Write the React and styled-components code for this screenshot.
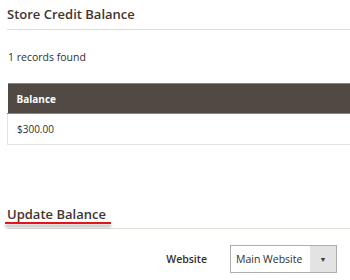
import React from "react"
import styled, { createGlobalStyle } from "styled-components"

const GlobalStyle = createGlobalStyle`
  body {
    margin: 0;
    background: #fff;
    font-family: "Open Sans", "Noto Sans", sans-serif;
    color: #303030;
  }
`

const Page = styled.div`
  width: 350px;
  height: 280px;
  overflow: hidden;
  padding-left: 7px;
  box-sizing: border-box;
`

const SectionTitle = styled.div`
  font-size: 13px;
  font-weight: 600;
  color: #41362f;
  line-height: 16px;
  padding-top: 6px;
  padding-bottom: 7px;
  border-bottom: 1px solid #e3ddd4;
`

const Records = styled.div`
  font-size: 10.5px;
  line-height: 14px;
  margin-top: 20px;
  padding-left: 1px;
  color: #303030;
`

const Grid = styled.table`
  width: 100%;
  margin-top: 19px;
  border-collapse: collapse;
  font-size: 10px;

  th {
    background: #514943;
    color: #fff;
    text-align: left;
    font-weight: 700;
    height: 29px;
    padding: 0 9px;
    border-top: 1px solid #8a837e;
    border-bottom: 1px solid #8a837e;
  }

  td {
    height: 30px;
    padding: 0 9px;
    border-left: 1px solid #e3e3e3;
    border-bottom: 1px solid #e3e3e3;
  }
`

const UpdateTitle = styled.div`
  margin-top: 61px;
  font-size: 13px;
  font-weight: 600;
  color: #41362f;
  line-height: 16px;
  padding-bottom: 6px;
  border-bottom: 1px solid #e3ddd4;

  span {
    display: inline-block;
    position: relative;
  }

  span::after {
    content: "";
    position: absolute;
    left: -2px;
    right: -5px;
    bottom: -2px;
    height: 2px;
    background: #e3141b;
    box-shadow: 0 3px 3px rgba(0, 0, 0, 0.35);
  }
`

const FieldRow = styled.div`
  display: flex;
  align-items: center;
  margin-top: 16px;
`

const Label = styled.label`
  width: 223px;
  text-align: right;
  font-size: 10.5px;
  font-weight: 600;
  color: #303030;
  padding-right: 23px;
  box-sizing: border-box;
`

const Select = styled.div`
  display: flex;
  width: 107px;
  height: 28px;
  border: 1px solid #adadad;
  box-sizing: border-box;
  font-size: 10.5px;
  color: #303030;
`

const SelectValue = styled.div`
  flex: 1;
  display: flex;
  align-items: center;
  padding-left: 5px;
`

const SelectArrow = styled.div`
  width: 26px;
  background: #e3e3e3;
  display: flex;
  align-items: center;
  justify-content: center;
  font-size: 7px;
  color: #41362f;
`

export default function App() {
  return (
    <Page>
      <GlobalStyle />
      <SectionTitle>Store Credit Balance</SectionTitle>
      <Records>1 records found</Records>
      <Grid>
        <thead>
          <tr>
            <th>Balance</th>
          </tr>
        </thead>
        <tbody>
          <tr>
            <td>$300.00</td>
          </tr>
        </tbody>
      </Grid>
      <UpdateTitle>
        <span>Update Balance</span>
      </UpdateTitle>
      <FieldRow>
        <Label>Website</Label>
        <Select>
          <SelectValue>Main Website</SelectValue>
          <SelectArrow>▼</SelectArrow>
        </Select>
      </FieldRow>
    </Page>
  )
}
